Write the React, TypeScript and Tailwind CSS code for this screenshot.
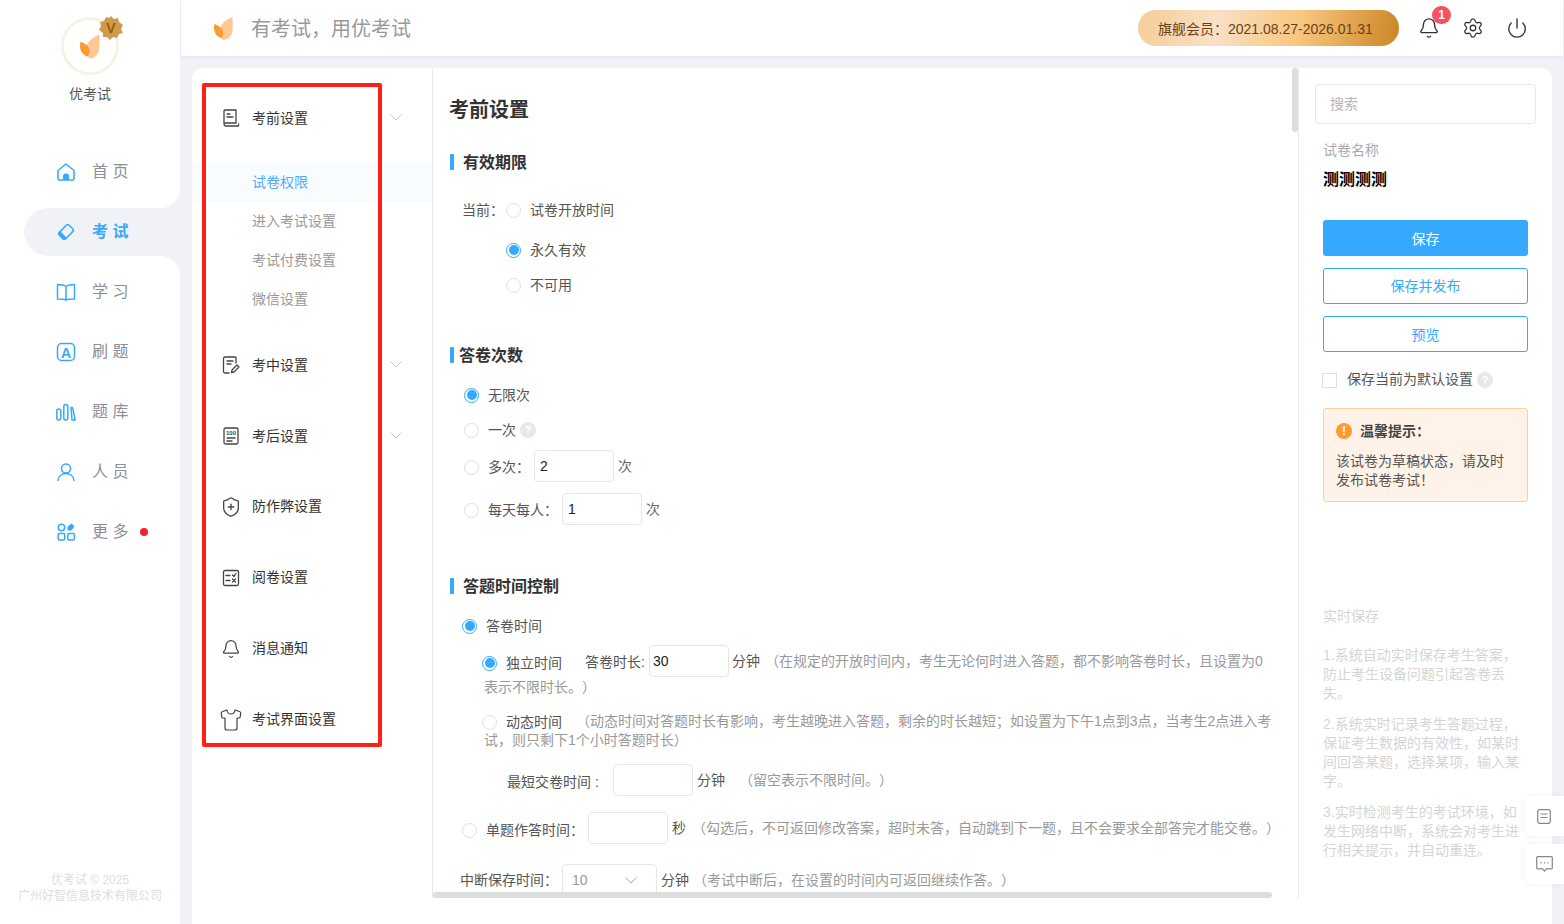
import React from 'react';
import { Bell, Settings, Power, ShieldPlus, Shirt } from 'lucide-react';

const C = '\uFF0C';
const L = '\uFF08';
const R = '\uFF09';
const K = '\uFF1A';
const S = '\uFF1B';
const E = '\uFF01';

const Leaf = ({ className }: { className: string }) => (
  <svg viewBox="0 0 20 23" className={className}>
    <path d="M18.5 0C18.5 0 19 9 18.5 13C18 18.5 14.5 23 9 23C6 20 6 16 6 13C6 8 11 3 18.5 0Z" fill="#fdc894" />
    <path d="M0.5 7C5 9 9 11 9 16C9 18 8.5 19.5 7.5 21C3 20 0 16 0 11C0 9 0.2 8 0.5 7Z" fill="#fb9a2e" />
  </svg>
);

const blue = '#36a9fe';
const NavIcon = ({ name }: { name: string }) => {
  const p = { fill: 'none', stroke: blue, strokeWidth: 1.5, strokeLinejoin: 'round' as const, strokeLinecap: 'round' as const };
  return (
    <svg viewBox="0 0 20 20" className="h-5 w-5">
      {name === 'home' && (
        <>
          <path d="M2 8.5L10 2L18 8.5V16.5A1.5 1.5 0 0 1 16.5 18H3.5A1.5 1.5 0 0 1 2 16.5Z" {...p} />
          <path d="M7 18V14.5A3 3 0 0 1 13 14.5V18Z" fill={blue} />
        </>
      )}
      {name === 'exam' && (
        <g transform="rotate(-45 10 10)">
          <rect x="3" y="5.5" width="14" height="9" rx="2" {...p} />
          <path d="M4.5 5.5H6.5V14.5H4.5A1.5 1.5 0 0 1 3 13V7A1.5 1.5 0 0 1 4.5 5.5Z" fill={blue} />
        </g>
      )}
      {name === 'book' && <path d="M10 4.5C8 3 5 2.5 1.5 2.5V17C5 17 8 17 10 18C12 17 15 17 18.5 17V2.5C15 2.5 12 3 10 4.5ZM10 4.5V18" {...p} />}
      {name === 'a' && (
        <>
          <rect x="1.5" y="1.5" width="17" height="17" rx="4" {...p} />
          <text x="10" y="15.5" textAnchor="middle" fontSize="14" fontWeight="700" fill={blue} fontFamily="Liberation Sans, sans-serif">A</text>
        </>
      )}
      {name === 'bars' && (
        <>
          <rect x="0.8" y="7" width="4" height="11" rx="2" {...p} />
          <rect x="7.8" y="2.5" width="4" height="15.5" rx="2" {...p} />
          <path d="M15 5.5L16.5 5.5L19.2 18L16 18Z" {...p} />
        </>
      )}
      {name === 'user' && (
        <>
          <circle cx="10" cy="6.5" r="4.5" {...p} />
          <path d="M2 18.5C2.5 14 6 11.5 10 11.5C14 11.5 17.5 14 18 18.5" {...p} />
        </>
      )}
      {name === 'more' && (
        <>
          <circle cx="5.5" cy="5.5" r="3.2" {...p} />
          <path d="M11.5 5L15 1.5L18.5 4L15.5 8.5H11.5Z" fill={blue} />
          <rect x="2.2" y="11.5" width="6.5" height="6.5" rx="1" {...p} />
          <rect x="11.8" y="11.5" width="6.5" height="6.5" rx="1" {...p} />
        </>
      )}
    </svg>
  );
};

const MenuIcon = ({ name }: { name: string }) => {
  const p = { fill: 'none', stroke: '#444', strokeWidth: 1.3, strokeLinejoin: 'round' as const, strokeLinecap: 'round' as const };
  if (name === 'shield') return <ShieldPlus size={22} strokeWidth={1.4} color="#444" />;
  if (name === 'bell') return <Bell size={20} strokeWidth={1.5} color="#444" />;
  if (name === 'shirt') return <Shirt size={24} strokeWidth={1.2} color="#444" />;
  return (
    <svg viewBox="0 0 18 18" className="h-[18px] w-[18px]">
      {name === 'pre' && (
        <>
          <path d="M2 15V2A1 1 0 0 1 3 1H14V14H3.2A1.6 1.6 0 0 0 3.2 17H16.5V15" {...p} />
          <path d="M5 5H8M5 8H11" {...p} />
        </>
      )}
      {name === 'mid' && (
        <>
          <path d="M14 7V1.5A1 1 0 0 0 13 1H3A1.5 1.5 0 0 0 1.5 2.5V15.5A1.5 1.5 0 0 0 3 17H7" {...p} />
          <path d="M5 5H11M5 8H9" {...p} />
          <path d="M9.5 16.5L10 14L15 9L17 11L12 16Z" {...p} />
        </>
      )}
      {name === 'post' && (
        <>
          <rect x="2" y="1" width="14" height="16" rx="1.5" {...p} />
          <text x="9" y="8" textAnchor="middle" fontSize="6" fontWeight="700" fill="#444" fontFamily="Liberation Sans, sans-serif">100</text>
          <path d="M5 11H13M5 14H10" {...p} />
        </>
      )}
      {name === 'mark' && (
        <>
          <rect x="1.5" y="1.5" width="15" height="15" rx="1.5" {...p} />
          <path d="M4 6.5H8M10.5 6L12 7.5L14 4.5M4 11.5H8M10.5 10L13.5 13M13.5 10L10.5 13" {...p} />
        </>
      )}
    </svg>
  );
};

const Chevron = ({ color = '#c8c8c8' }: { color?: string }) => (
  <svg viewBox="0 0 12 7" className="block h-[7px] w-3" fill="none" stroke={color} strokeWidth="1">
    <path d="M0.5 0.5L6 6L11.5 0.5" />
  </svg>
);

const Radio = ({ on }: { on?: boolean }) =>
  on ? (
    <span className="flex h-[15px] w-[15px] shrink-0 items-center justify-center rounded-full border border-[#36a9fe] bg-white">
      <span className="block h-[10px] w-[10px] rounded-full bg-[#36a9fe]" />
    </span>
  ) : (
    <span className="block h-[15px] w-[15px] shrink-0 rounded-full border border-[#dcdfe6] bg-white" />
  );

const Help = () => (
  <span className="flex h-4 w-4 shrink-0 items-center justify-center rounded-full bg-[#e8e8e8] text-[11px] font-bold text-white">?</span>
);

const Box = ({ v, pad = 'pl-[5px]' }: { v?: string; pad?: string }) => (
  <span className={`flex h-8 w-20 shrink-0 items-center rounded border border-[#e4e6ea] ${pad} text-[14px] text-[#222]`}>{v}</span>
);

const Heading = ({ children, mt, gap }: { children: React.ReactNode; mt: string; gap: string }) => (
  <div className={`flex h-6 items-center ${mt} ml-[17px]`}>
    <span className="h-4 w-1 rounded-[1px] bg-[#36a9fe]" />
    <span className={`${gap} pt-[2px] text-[16px] font-bold text-[#333]`}>{children}</span>
  </div>
);

const nav = [
  ['home', '首 页'],
  ['exam', '考 试'],
  ['book', '学 习'],
  ['a', '刷 题'],
  ['bars', '题 库'],
  ['user', '人 员'],
  ['more', '更 多'],
];

const menu = [
  ['mid', '考中设置', true],
  ['post', '考后设置', true],
  ['shield', '防作弊设置', false],
  ['mark', '阅卷设置', false],
  ['bell', '消息通知', false],
  ['shirt', '考试界面设置', false],
] as const;

export default function App() {
  return (
    <div className="relative flex h-[924px] w-[1564px] overflow-hidden bg-[#f0f2f7] font-['Liberation_Sans','Noto_Sans_CJK_SC',sans-serif] text-[14px] text-[#555] [text-spacing-trim:space-all]">
      {/* Sidebar */}
      <aside className="relative flex w-[180px] shrink-0 flex-col bg-white">
        <div className="relative mx-auto mt-[17px] flex h-[58px] w-[58px] items-center justify-center rounded-full border-[3px] border-[#f8f1e6]">
          <Leaf className="h-[25px] w-[21px]" />
          <svg viewBox="0 0 24 24" className="absolute right-[-7px] top-[-4px] h-[24px] w-[24px]">
            <polygon points="12,0 15,3 19,2 20,6 24,9 22,13 24,17 20,18 18,22 14,21 11,24 8,21 4,21 4,17 0,14 2,10 1,6 5,5 7,1 10,2" fill="#cf9a4c" />
            <text x="12" y="17" textAnchor="middle" fontSize="14" fontWeight="700" fill="#9a5a10" fontFamily="Liberation Sans, sans-serif">V</text>
          </svg>
        </div>
        <div className="mt-[9px] text-center leading-5 text-[#555]">优考试</div>
        <nav className="mt-[44px] flex flex-col gap-3">
          {nav.map(([icon, label], i) => {
            const active = i === 1;
            return (
              <div
                key={label}
                className={`relative flex h-12 items-center ${active ? 'ml-6 rounded-l-[24px] bg-[#f0f2f7] pl-[32px]' : 'pl-[56px]'}`}
              >
                <NavIcon name={icon} />
                <span className={`ml-4 text-[16px] ${active ? 'font-bold text-[#36a9fe]' : 'text-[#8a8f99]'}`}>{label}</span>
                {i === 6 && <span className="ml-[12px] h-2 w-2 rounded-full bg-[#f5222d]" />}
                {active && (
                  <>
                    <span className="absolute right-0 top-[-20px] h-5 w-5 bg-[#f0f2f7]">
                      <span className="block h-5 w-5 rounded-br-[20px] bg-white" />
                    </span>
                    <span className="absolute bottom-[-20px] right-0 h-5 w-5 bg-[#f0f2f7]">
                      <span className="block h-5 w-5 rounded-tr-[20px] bg-white" />
                    </span>
                  </>
                )}
              </div>
            );
          })}
        </nav>
        <div className="absolute bottom-[20px] left-0 w-full text-center text-[12px] leading-4 text-[#dedede]">
          优考试 © 2025
          <br />
          广州好智信息技术有限公司
        </div>
      </aside>

      <main className="ml-px flex min-w-0 flex-1 flex-col">
        {/* Header */}
        <header className="mr-px flex h-14 shrink-0 items-center bg-white pl-[33px] pr-[35px] shadow-[0_1px_4px_rgba(0,0,0,0.06)]">
          <Leaf className="h-[23px] w-5" />
          <span className="ml-[17px] pt-[2px] text-[20px] text-[#999]">{`有考试${C}用优考试`}</span>
          <div className="ml-auto flex h-9 w-[261px] items-center rounded-full bg-[linear-gradient(100deg,#f5cd97_0%,#f9e0c6_30%,#f8c67e_62%,#cc8525_100%)] pl-5 pt-[2px] text-[14px] text-[#6b4016]">
            {`旗舰会员${K}2021.08.27-2026.01.31`}
          </div>
          <div className="relative ml-[19px] flex w-[22px] justify-center">
            <Bell size={22} strokeWidth={1.5} color="#333" />
            <span className="absolute left-[14px] top-[-11px] flex h-[18px] w-[19px] items-center justify-center rounded-full bg-[#f5515f] text-[12px] font-bold text-white">1</span>
          </div>
          <Settings className="ml-[22px]" size={22} strokeWidth={1.4} color="#333" />
          <Power className="ml-[22px]" size={22} strokeWidth={1.5} color="#333" />
        </header>

        {/* Card */}
        <div className="relative ml-[11px] mt-3 flex h-[856px] w-[1360px] rounded-t-[10px] bg-white">
          {/* Menu */}
          <div className="h-[830px] w-[241px] shrink-0 overflow-hidden border-r border-[#e9e9e9] pt-[15px]">
            <div className="flex h-[70px] items-center pl-[27px] pr-[30px]">
              <span className="flex w-6 justify-center"><MenuIcon name="pre" /></span>
              <span className="ml-[9px] text-[#333]">考前设置</span>
              <span className="mb-[2px] ml-auto"><Chevron /></span>
            </div>
            <div className="mt-[10px] flex h-[39px] items-center bg-[#f8fcff] pl-[60px] text-[#4dacfd]">试卷权限</div>
            {['进入考试设置', '考试付费设置', '微信设置'].map((t) => (
              <div key={t} className="flex h-[39px] items-center pl-[60px] text-[#999]">{t}</div>
            ))}
            <div className="mt-[10px]">
              {menu.map(([icon, label, chev]) => (
                <div key={label} className="flex h-[71px] items-center pl-[27px] pr-[30px]">
                  <span className="flex w-6 justify-center"><MenuIcon name={icon} /></span>
                  <span className={`ml-[9px] text-[#333] ${chev ? 'pt-[2px]' : ''}`}>{label}</span>
                  {chev && <span className="ml-auto"><Chevron /></span>}
                </div>
              ))}
            </div>
          </div>

          {/* Center */}
          <div className="relative h-[830px] w-[865px] shrink-0 overflow-hidden">
            <div className="ml-4 mt-[28px] h-7 text-[20px] font-bold leading-7 text-[#333]">考前设置</div>

            <Heading mt="mt-[26px]" gap="ml-[9px]">有效期限</Heading>
            <div className="ml-[29px] mt-5 flex h-8 items-center">
              <span className="w-[44px]">{`当前${K}`}</span>
              <Radio />
              <span className="ml-[9px]">试卷开放时间</span>
            </div>
            <div className="ml-[73px] mt-2 flex h-8 items-center"><Radio on /><span className="ml-[9px]">永久有效</span></div>
            <div className="ml-[73px] mt-[3px] flex h-8 items-center"><Radio /><span className="ml-[9px]">不可用</span></div>

            <Heading mt="mt-[42px]" gap="ml-[5px]">答卷次数</Heading>
            <div className="ml-[31px] mt-3 flex h-8 items-center"><Radio on /><span className="ml-[9px]">无限次</span></div>
            <div className="ml-[31px] mt-[3px] flex h-8 items-center"><Radio /><span className="ml-[9px]">一次</span><span className="ml-[4px]"><Help /></span></div>
            <div className="ml-[31px] mt-1 flex h-8 items-center">
              <span className="mt-[2px]"><Radio /></span>
              <span className="ml-[9px] mt-[2px] w-[46px]">{`多次${K}`}</span>
              <Box v="2" />
              <span className="ml-1 text-[#666]">次</span>
            </div>
            <div className="ml-[31px] mt-[11px] flex h-8 items-center">
              <span className="mt-[3px]"><Radio /></span>
              <span className="ml-[9px] mt-[3px] w-[74px]">{`每天每人${K}`}</span>
              <Box v="1" />
              <span className="ml-1 text-[#666]">次</span>
            </div>

            <Heading mt="mt-[49px]" gap="ml-[9px]">答题时间控制</Heading>
            <div className="ml-[29px] mt-3 flex h-8 items-center"><Radio on /><span className="ml-[9px]">答卷时间</span></div>
            <div className="ml-[49px] mt-[3px] flex h-8 items-center whitespace-nowrap">
              <span className="mt-[4px]"><Radio on /></span>
              <span className="ml-[9px] mt-[4px] w-[79px]">独立时间</span>
              <span className="mt-[2px] w-[64px]">答卷时长:</span>
              <Box v="30" pad="pl-[3px]" />
              <span className="ml-[3px]">分钟</span>
              <span className="ml-[5px] text-[#999]">{`${L}在规定的开放时间内${C}考生无论何时进入答题${C}都不影响答卷时长${C}且设置为0`}</span>
            </div>
            <div className="ml-[51px] h-5 leading-5 text-[#999]">{`表示不限时长。${R}`}</div>
            <div className="ml-[49px] mt-[15px] flex h-[19px] items-center whitespace-nowrap">
              <span className="mt-[2px]"><Radio /></span>
              <span className="ml-[9px] mt-[2px]">动态时间</span>
              <span className="ml-[14px] text-[#999]">{`${L}动态时间对答题时长有影响${C}考生越晚进入答题${C}剩余的时长越短${S}如设置为下午1点到3点${C}当考生2点进入考`}</span>
            </div>
            <div className="ml-[51px] h-[19px] leading-[19px] text-[#999]">{`试${C}则只剩下1个小时答题时长${R}`}</div>
            <div className="ml-[74px] mt-[14px] flex h-8 items-center whitespace-nowrap">
              <span className="mt-[4px] w-[106px]">最短交卷时间 :</span>
              <Box />
              <span className="ml-1">分钟</span>
              <span className="ml-[14px] text-[#999]">{`${L}留空表示不限时间。${R}`}</span>
            </div>
            <div className="ml-[29px] mt-4 flex h-8 items-center whitespace-nowrap">
              <span className="mt-[4px]"><Radio /></span>
              <span className="ml-[9px] mt-[4px] w-[102px]">{`单题作答时间${K}`}</span>
              <Box />
              <span className="ml-1">秒</span>
              <span className="ml-[6px] text-[#999]">{`${L}勾选后${C}不可返回修改答案${C}超时未答${C}自动跳到下一题${C}且不会要求全部答完才能交卷。${R}`}</span>
            </div>
            <div className="ml-[27px] mt-5 flex h-8 items-center whitespace-nowrap">
              <span className="w-[102px]">{`中断保存时间${K}`}</span>
              <span className="flex h-8 w-[95px] items-center justify-between rounded border border-[#e4e6ea] pl-[9px] pr-[19px] text-[#999]">10<Chevron color="#aaa" /></span>
              <span className="ml-1">分钟</span>
              <span className="ml-[4px] text-[#999]">{`${L}考试中断后${C}在设置的时间内可返回继续作答。${R}`}</span>
            </div>

            <span className="absolute right-0 top-0 h-16 w-[6px] rounded-[3px] bg-[#dcdddf]" />
            <span className="absolute bottom-0 left-0 h-[6px] w-[839px] rounded-[3px] bg-[#dcdddf]" />
          </div>

          {/* Right */}
          <div className="h-[830px] flex-1 border-l border-[#e9e9e9]">
            <div className="ml-4 mt-4 flex h-10 w-[221px] items-center rounded border border-[#e8e8ec] pl-[14px] text-[#b5b5b5]">搜索</div>
            <div className="ml-6 mt-4 h-5 leading-5 text-[#aaa]">试卷名称</div>
            <div className="ml-6 mt-[8px] h-6 text-[16px] font-bold leading-6 text-black">测测测测</div>
            <div className="ml-6 mt-[28px] flex h-9 w-[205px] items-center justify-center rounded-[3px] bg-[#36a9fe] pt-[2px] text-white">保存</div>
            <div className="ml-6 mt-3 flex h-9 w-[205px] items-center justify-center rounded-[3px] border border-[#36a9fe] text-[#36a9fe]">保存并发布</div>
            <div className="ml-6 mt-3 flex h-9 w-[205px] items-center justify-center rounded-[3px] border border-[#36a9fe] pt-[2px] text-[#36a9fe]">预览</div>
            <div className="ml-[23px] mt-5 flex h-4 items-center">
              <span className="block h-[15px] w-[15px] border border-[#dcdfe6]" />
              <span className="ml-[10px] mb-[2px]">保存当前为默认设置</span>
              <span className="ml-[4px]"><Help /></span>
            </div>
            <div className="ml-6 mt-5 h-[94px] w-[205px] rounded-[3px] border border-[#fdcf9d] bg-[#fff2e8] pl-3 pt-[14px]">
              <div className="flex h-4 items-center">
                <span className="flex h-4 w-4 items-center justify-center rounded-full bg-[#ff9a2e] text-[12px] font-bold text-white">!</span>
                <span className="ml-2 font-bold text-[#444]">{`温馨提示${K}`}</span>
              </div>
              <div className="mt-[13px] leading-[19px] text-[#555]">
                {`该试卷为草稿状态${C}请及时`}
                <br />
                {`发布试卷考试${E}`}
              </div>
            </div>
            <div className="ml-6 mt-[104px] h-5 leading-5 text-[#d5d5d5]">实时保存</div>
            <div className="ml-6 mt-5 whitespace-nowrap leading-[19px] text-[#d5d5d5]">
              {`1.系统自动实时保存考生答案${C}`}
              <br />
              防止考生设备问题引起答卷丢
              <br />
              失。
            </div>
            <div className="ml-6 mt-3 whitespace-nowrap leading-[19px] text-[#d5d5d5]">
              {`2.系统实时记录考生答题过程${C}`}
              <br />
              {`保证考生数据的有效性${C}如某时`}
              <br />
              {`间回答某题${C}选择某项${C}输入某`}
              <br />
              字。
            </div>
            <div className="ml-6 mt-3 whitespace-nowrap leading-[19px] text-[#d5d5d5]">
              {`3.实时检测考生的考试环境${C}如`}
              <br />
              {`发生网络中断${C}系统会对考生进`}
              <br />
              {`行相关提示${C}并自动重连。`}
            </div>
          </div>
        </div>
      </main>

      {/* Red annotation */}
      <div className="absolute left-[202px] top-[83px] h-[664px] w-[180px] rounded-[2px] border-4 border-[#ff2015]" />

      {/* Floating buttons */}
      <div className="absolute right-0 top-[796px] flex h-10 w-10 items-center justify-center rounded-l-lg bg-white shadow-[0_0_6px_rgba(0,0,0,0.06)]">
        <svg viewBox="0 0 14 15" className="h-[15px] w-[14px]" fill="none" stroke="#888" strokeWidth="1.2">
          <rect x="0.7" y="0.7" width="12.6" height="13.6" rx="2" />
          <path d="M3.5 5H10.5M3.5 8.5H10.5" />
        </svg>
      </div>
      <div className="absolute right-0 top-[844px] flex h-10 w-10 items-center justify-center rounded-l-lg bg-white shadow-[0_0_6px_rgba(0,0,0,0.06)]">
        <svg viewBox="0 0 17 16" className="h-4 w-[17px]" fill="none" stroke="#888" strokeWidth="1.2">
          <path d="M1.5 0.7H15.5A0.8 0.8 0 0 1 16.3 1.5V12A0.8 0.8 0 0 1 15.5 12.8H10.5L8.5 15L6.5 12.8H1.5A0.8 0.8 0 0 1 0.7 12V1.5A0.8 0.8 0 0 1 1.5 0.7Z" />
          <path d="M4.5 6.8H5.5M8 6.8H9M11.5 6.8H12.5" strokeWidth="1.4" />
        </svg>
      </div>
    </div>
  );
}
